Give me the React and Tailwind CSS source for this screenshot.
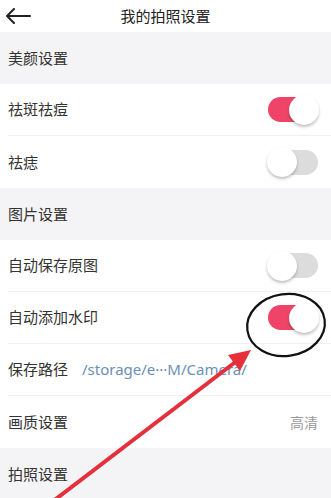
import React from "react";

const FONT = { fontFamily: '"Noto Sans CJK SC", "Noto Sans", sans-serif' };
const LATIN = { fontFamily: '"Noto Sans", "Liberation Sans", sans-serif' };

function Toggle({ on }) {
  return (
    <div className="relative w-[50px] h-[28px] flex items-center">
      <div className={`w-full h-[25px] rounded-full ${on ? "bg-[#ef4467]" : "bg-[#dcdcdc]"}`} />
      <div
        className={`absolute top-[-1px] w-[30px] h-[30px] rounded-full bg-white shadow-[0_2px_3px_rgba(0,0,0,0.25)] ${on ? "right-[-1px]" : "left-[-1px]"}`}
      />
    </div>
  );
}

function Section({ title }) {
  return (
    <div className="h-[52px] bg-[#f4f4f6] flex items-center px-2 text-[15px] text-[#333]">
      {title}
    </div>
  );
}

function Row({ label, children, last }) {
  return (
    <div className="h-[52px] bg-white pl-2 flex">
      <div className={`flex-1 flex items-center pr-[13px] ${last ? "" : "border-b border-[#f0f0f0]"}`}>
        <span className="text-[15px] text-[#333]">{label}</span>
        <div className="flex-1 flex justify-end items-center">{children}</div>
      </div>
    </div>
  );
}

export default function App() {
  return (
    <div className="relative w-full h-[498px] overflow-hidden bg-white" style={FONT}>
      {/* 顶栏 */}
      <div className="h-[32px] flex items-center relative bg-white">
        <svg width="26" height="16" viewBox="0 0 26 16" className="ml-[5px]">
          <path d="M25 8H2M9 1L2 8l7 7" fill="none" stroke="#222" strokeWidth="2" strokeLinecap="round" strokeLinejoin="round" />
        </svg>
        <div className="absolute inset-0 flex items-center justify-center text-[15px] text-[#222] pointer-events-none">
          我的拍照设置
        </div>
      </div>

      <Section title="美颜设置" />
      <Row label="祛斑祛痘"><Toggle on /></Row>
      <Row label="祛痣" last><Toggle on={false} /></Row>

      <Section title="图片设置" />
      <Row label="自动保存原图"><Toggle on={false} /></Row>
      <Row label="自动添加水印"><Toggle on /></Row>
      <Row label="保存路径">
        <span className="flex-1 ml-[14px] text-[15px] text-[#6b8fb6]" style={LATIN}>
          /storage/e···M/Camera/
        </span>
      </Row>
      <Row label="画质设置" last>
        <span className="text-[14px] text-[#999]">高清</span>
      </Row>

      <Section title="拍照设置" />

      {/* 标注：圈和箭头 */}
      <svg className="absolute inset-0 pointer-events-none" width="331" height="498" viewBox="0 0 331 498">
        <ellipse cx="286" cy="325" rx="39" ry="31" fill="none" stroke="#111" strokeWidth="2.2" transform="rotate(-8 286 325)" />
        <line x1="52" y1="502" x2="238" y2="360" stroke="#e5303c" strokeWidth="4" strokeLinecap="round" />
        <polygon points="251,350 228,355 240,371" fill="#e5303c" />
      </svg>
    </div>
  );
}
